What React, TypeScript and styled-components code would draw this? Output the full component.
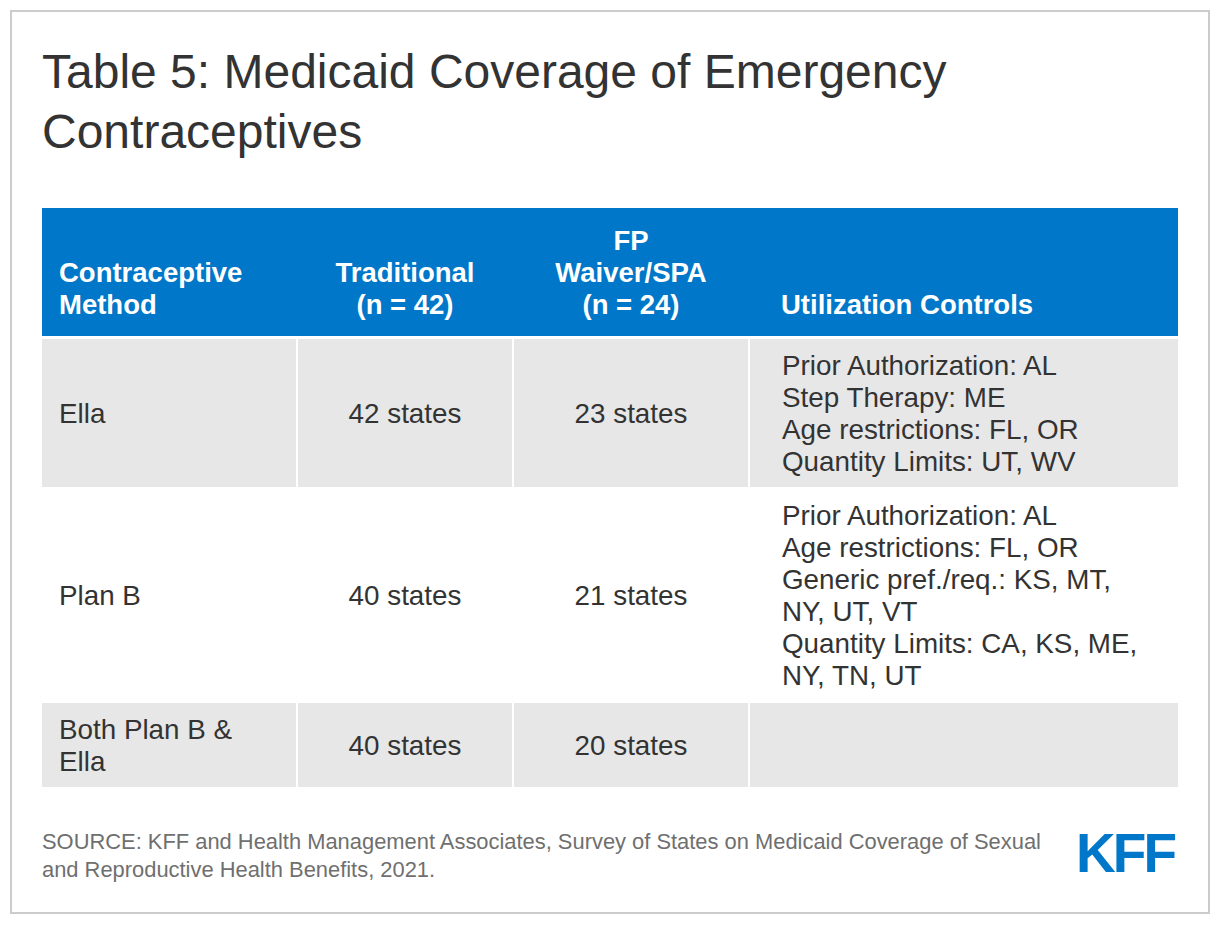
import React from "react";
import styled, { createGlobalStyle } from "styled-components";

const GlobalStyle = createGlobalStyle`
  body {
    margin: 0;
    background: #fff;
    font-family: "Liberation Sans", Arial, sans-serif;
  }
`;

const Card = styled.div`
  box-sizing: border-box;
  width: 1200px;
  margin: 10px;
  padding: 30px 30px 28px;
  border: 2px solid #cccccc;
  background: #fff;
`;

const Title = styled.h1`
  margin: 0 0 46px;
  font-size: 48px;
  line-height: 60px;
  font-weight: 400;
  color: #333333;
`;

const cols = "254px 214px 234px 428px";

const HeadRow = styled.div`
  display: grid;
  grid-template-columns: ${cols};
  column-gap: 2px;
  align-items: end;
  padding: 17px 0 15px;
  margin-bottom: 3px;
  background: #0077c8;
`;

const HeadCell = styled.div<{ $align?: "left" | "center"; $pad?: number }>`
  padding-left: ${(p) => p.$pad ?? 0}px;
  text-align: ${(p) => p.$align ?? "left"};
  color: #fff;
  font-size: 27.5px;
  line-height: 32px;
  font-weight: 700;
`;

const Body = styled.div`
  display: flex;
  flex-direction: column;
  gap: 2px;
`;

const Row = styled.div<{ $shaded?: boolean }>`
  display: grid;
  grid-template-columns: ${cols};
  column-gap: 2px;
  > div {
    background: ${(p) => (p.$shaded ? "#e7e7e7" : "#fff")};
  }
`;

const Cell = styled.div<{ $align?: "left" | "center"; $pad?: number }>`
  display: flex;
  flex-direction: column;
  justify-content: center;
  align-items: ${(p) => (p.$align === "center" ? "center" : "flex-start")};
  padding: 11px 0 9px ${(p) => p.$pad ?? 0}px;
  color: #333333;
  font-size: 27.8px;
  line-height: 32px;
`;

const Method = styled.span`
  width: 190px;
`;

const Footer = styled.div`
  display: flex;
  justify-content: space-between;
  align-items: center;
  margin-top: 41px;
`;

const Source = styled.p`
  margin: 0;
  width: 1020px;
  font-size: 21.9px;
  line-height: 28px;
  color: #6f6f6f;
`;

const Logo = styled.div`
  margin: -6px 4px 0 0;
  font-size: 55px;
  line-height: 44px;
  font-weight: 700;
  letter-spacing: -3px;
  color: #0077c8;
`;

interface Entry {
  method: string;
  traditional: string;
  waiver: string;
  controls: string[];
  shaded: boolean;
}

const rows: Entry[] = [
  {
    method: "Ella",
    traditional: "42 states",
    waiver: "23 states",
    controls: [
      "Prior Authorization: AL",
      "Step Therapy: ME",
      "Age restrictions: FL, OR",
      "Quantity Limits: UT, WV",
    ],
    shaded: true,
  },
  {
    method: "Plan B",
    traditional: "40 states",
    waiver: "21 states",
    controls: [
      "Prior Authorization: AL",
      "Age restrictions: FL, OR",
      "Generic pref./req.: KS, MT,",
      "NY, UT, VT",
      "Quantity Limits: CA, KS, ME,",
      "NY, TN, UT",
    ],
    shaded: false,
  },
  {
    method: "Both Plan B & Ella",
    traditional: "40 states",
    waiver: "20 states",
    controls: [],
    shaded: true,
  },
];

export default function App() {
  return (
    <>
      <GlobalStyle />
      <Card>
        <Title>
          Table 5: Medicaid Coverage of Emergency
          <br />
          Contraceptives
        </Title>
        <HeadRow>
          <HeadCell $pad={17}>
            Contraceptive
            <br />
            Method
          </HeadCell>
          <HeadCell $align="center">
            Traditional
            <br />
            (n = 42)
          </HeadCell>
          <HeadCell $align="center">
            FP
            <br />
            Waiver/SPA
            <br />
            (n = 24)
          </HeadCell>
          <HeadCell $pad={31}>Utilization Controls</HeadCell>
        </HeadRow>
        <Body>
          {rows.map((r) => (
            <Row key={r.method} $shaded={r.shaded}>
              <Cell $pad={17}>
                <Method>{r.method}</Method>
              </Cell>
              <Cell $align="center">{r.traditional}</Cell>
              <Cell $align="center">{r.waiver}</Cell>
              <Cell $pad={32}>
                {r.controls.map((c) => (
                  <span key={c}>{c}</span>
                ))}
              </Cell>
            </Row>
          ))}
        </Body>
        <Footer>
          <Source>
            SOURCE: KFF and Health Management Associates, Survey of States on Medicaid
            Coverage of Sexual and Reproductive Health Benefits, 2021.
          </Source>
          <Logo>KFF</Logo>
        </Footer>
      </Card>
    </>
  );
}
